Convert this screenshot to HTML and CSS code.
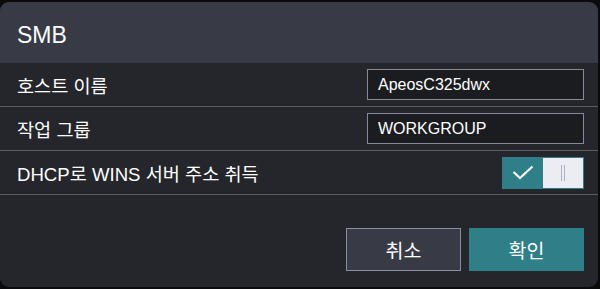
FILE: index.html
```html
<!DOCTYPE html>
<html lang="ko">
<head>
    <meta charset="UTF-8">
    <meta name="viewport" content="width=device-width, initial-scale=1.0">
    <title>SMB</title>
    <link rel="stylesheet" href="styles.css">
</head>
<body>
    <div class="dialog">
        <div class="dialog-header">SMB</div>
        <div class="dialog-body">
            <div class="row">
                <label for="hostName">호스트 이름</label>
                <input type="text" id="hostName" value="ApeosC325dwx">
            </div>
            <div class="row">
                <label for="workGroup">작업 그룹</label>
                <input type="text" id="workGroup" value="WORKGROUP">
            </div>
            <div class="row">
                <span class="label">DHCP로 WINS 서버 주소 취득</span>
                <div class="toggle">
                    <div class="toggle-on">
                        <svg width="22" height="15" viewBox="0 0 22 15">
                            <path d="M1.5 7 L8 13 L20.5 1.5" fill="none" stroke="#fff" stroke-width="2.2"/>
                        </svg>
                    </div>
                    <div class="toggle-off">
                        <span class="grip"></span>
                    </div>
                </div>
            </div>
        </div>
        <div class="dialog-footer">
            <button class="btn btn-cancel">취소</button>
            <button class="btn btn-ok">확인</button>
        </div>
    </div>
</body>
</html>
```

FILE: styles.css
```css
body {
    margin: 0;
    padding: 2px 0 0 0;
    background-color: #0b0b0c;
    font-family: "Liberation Sans", "Noto Sans CJK KR", sans-serif;
    color: #fff;
}

.dialog {
    width: 598px;
    height: 285px;
    background-color: #25262b;
    border-radius: 9px;
    overflow: hidden;
    display: flex;
    flex-direction: column;
}

.dialog-header {
    height: 61px;
    box-sizing: border-box;
    padding: 20px 17px 0;
    background-color: #383b45;
    font-size: 23px;
    line-height: 26px;
}

.row {
    height: 44px;
    box-sizing: border-box;
    border-bottom: 1px solid #5c5d64;
    padding: 0 14px 0 17px;
    display: flex;
    align-items: center;
    justify-content: space-between;
    font-size: 18.6px;
}

.row input[type="text"] {
    width: 217px;
    height: 31px;
    box-sizing: border-box;
    padding: 0 10px;
    border: 1px solid #868a98;
    background-color: #1b1c20;
    color: #fff;
    font-family: inherit;
    font-size: 16px;
    outline: none;
}

.toggle {
    width: 82px;
    height: 32px;
    box-sizing: border-box;
    border: 1px solid #2e7f87;
    display: flex;
}

.toggle-on {
    width: 40px;
    background-color: #2e7f87;
    display: flex;
    align-items: center;
    justify-content: center;
}

.toggle-off {
    flex: 1;
    background-color: #ecedf3;
    display: flex;
    align-items: center;
    justify-content: center;
}

.grip {
    width: 2px;
    height: 16px;
    border-left: 1px solid #a8afc4;
    border-right: 1px solid #a8afc4;
}

.dialog-footer {
    display: flex;
    justify-content: flex-end;
    gap: 8px;
    padding: 33px 14px 0;
}

.btn {
    width: 115px;
    height: 43px;
    font-family: inherit;
    font-size: 19.5px;
    color: #fff;
    cursor: pointer;
}

.btn-cancel {
    background-color: #383b45;
    border: 1px solid #8a8fa0;
}

.btn-ok {
    background-color: #2e7f87;
    border: none;
}
```
